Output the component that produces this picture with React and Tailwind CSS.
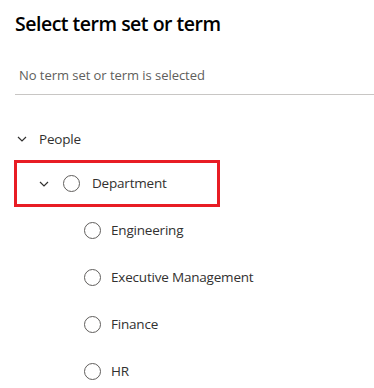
const Chevron = () => (
  <svg width="10" height="6" viewBox="0 0 10 6" className="shrink-0">
    <polyline points="1,1 5,5 9,1" fill="none" stroke="#323130" strokeWidth="1.2" />
  </svg>
);

const Radio = () => (
  <span className="block w-[17px] h-[17px] rounded-full border border-[#605e5c] shrink-0" />
);

const children = ["Engineering", "Executive Management", "Finance", "HR"];

export default function App() {
  return (
    <div className="w-[374px] h-[388px] bg-white overflow-hidden font-['Segoe_UI','Open_Sans',sans-serif] text-[#323130]">
      <div className="pl-[15px] pt-[10px]">
        <h1 className="h-[28px] leading-[28px] text-[19.5px] tracking-[-0.5px] font-semibold text-black">Select term set or term</h1>
        <div className="mt-[27px] h-[30px] border-b border-[#c8c6c4]">
          <div className="pl-[4px] h-[20px] leading-[20px] text-[13px] tracking-[-0.05px] text-[#605e5c]">No term set or term is selected</div>
        </div>
      </div>
      <div className="pl-[14px] mt-[23px] text-[13.5px] tracking-[-0.2px]">
        <div className="h-[42px] flex items-center pl-[3px]">
          <Chevron />
          <span className="ml-[12px]">People</span>
        </div>
        <div className="w-[206px] h-[47px] border-[3px] border-[#e81c24] flex items-center">
          <div className="ml-[22px] flex"><Chevron /></div>
          <div className="ml-[14px] flex"><Radio /></div>
          <span className="ml-[12px]">Department</span>
        </div>
        {children.map((c) => (
          <div key={c} className="h-[47px] flex items-center pl-[70px]">
            <Radio />
            <span className="ml-[10px]">{c}</span>
          </div>
        ))}
      </div>
    </div>
  );
}
